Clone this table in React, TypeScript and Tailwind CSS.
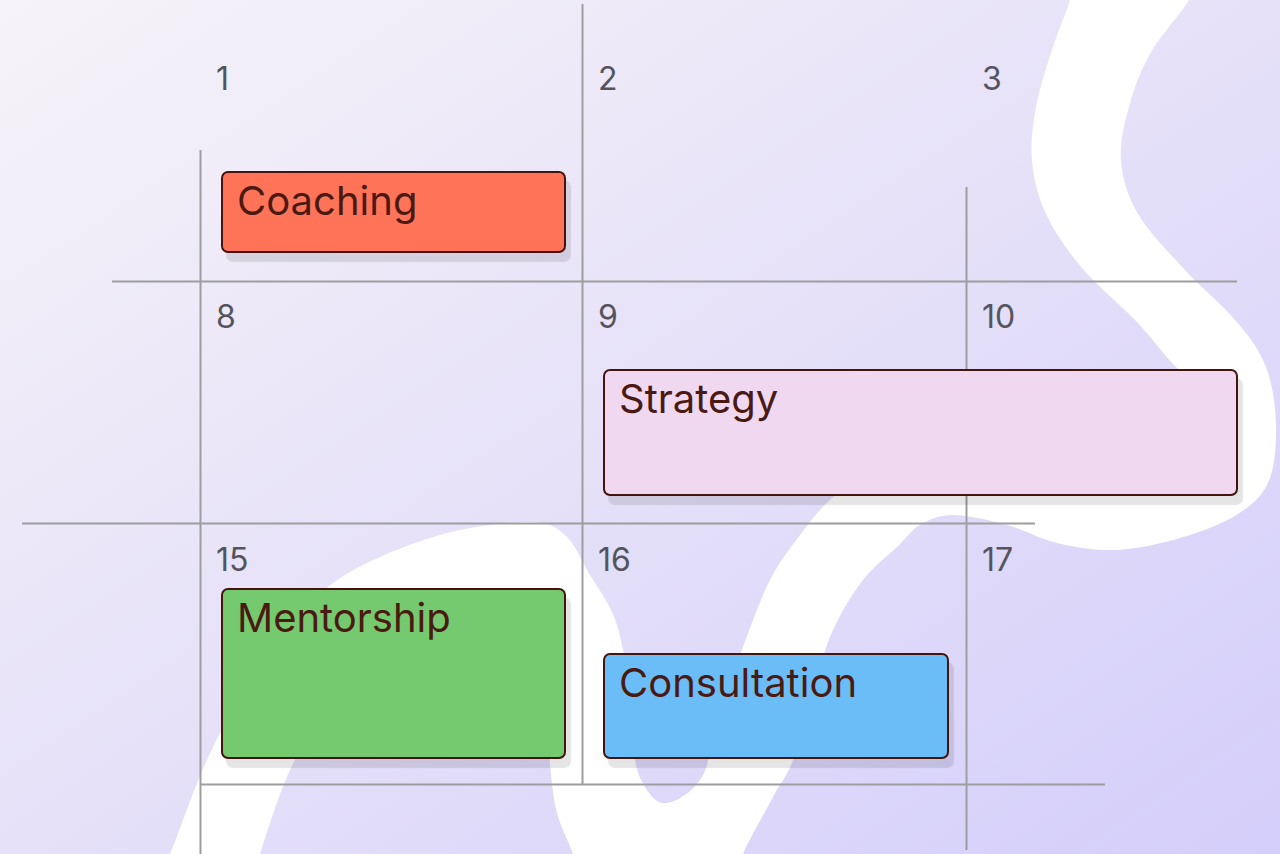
import React from "react";

type Pt = [number, number];

// Catmull-Rom through the points, returned as cubic segments
const smooth = (pts: Pt[]) => {
	let d = "";
	for (let i = 0; i < pts.length - 1; i++) {
		const p0 = pts[i - 1] || pts[i];
		const p1 = pts[i];
		const p2 = pts[i + 1];
		const p3 = pts[i + 2] || p2;
		const c1 = [p1[0] + (p2[0] - p0[0]) / 6, p1[1] + (p2[1] - p0[1]) / 6];
		const c2 = [p2[0] - (p3[0] - p1[0]) / 6, p2[1] - (p3[1] - p1[1]) / 6];
		d += ` C${c1[0]},${c1[1]} ${c2[0]},${c2[1]} ${p2[0]},${p2[1]}`;
	}
	return d;
};

// outer side of the S and the diagonal stroke, top to bottom
const sideB: Pt[] = [
	[1200, -30], [1189, 0], [1150, 54], [1129, 107], [1121, 161], [1138, 214],
	[1185, 270], [1236, 321], [1266, 367], [1276, 425], [1268, 483], [1233, 517],
	[1173, 540], [1113, 550], [1057, 543], [1007, 525], [953, 515], [920, 525],
	[897, 547], [863, 580], [833, 630], [813, 690], [793, 760], [773, 797],
	[743, 854], [733, 890],
];

// inner side of the arch under Mentorship
const hole: Pt[] = [
	[585, 895], [573, 854], [557, 813], [550, 763], [548, 700], [535, 640],
	[500, 615], [440, 620], [380, 652], [330, 702], [290, 770], [260, 854], [250, 895],
];

// arch top, the tongue, and back up the inner side of the S
const sideA: Pt[] = [
	[150, 895], [170, 854], [207, 760], [250, 680], [300, 615], [350, 572],
	[440, 535], [528, 522], [565, 535], [590, 575], [612, 612], [623, 650],
	[630, 705], [635, 760], [645, 787], [662, 803], [685, 795], [703, 775],
	[712, 745], [725, 700], [743, 647], [770, 580], [800, 535], [833, 497],
	[880, 465], [960, 448], [1060, 446], [1150, 440], [1195, 415], [1190, 385],
	[1165, 355], [1136, 321], [1082, 268], [1046, 214], [1032, 161], [1036, 107],
	[1052, 50], [1070, 0], [1075, -30],
];

const ribbon =
	`M${sideB[0][0]},${sideB[0][1]}` +
	smooth(sideB) +
	` L${hole[0][0]},${hole[0][1]}` +
	smooth(hole) +
	` L${sideA[0][0]},${sideA[0][1]}` +
	smooth(sideA) +
	" Z";

const Ribbon = () => (
	<svg className="absolute inset-0" width="1280" height="854" viewBox="0 0 1280 854">
		<path d={ribbon} fill="#ffffff" />
	</svg>
);

const GridLines = () => (
	<svg className="absolute inset-0" width="1280" height="854" viewBox="0 0 1280 854">
		<g stroke="#9d9d9f" strokeWidth="2">
			<line x1="200.5" y1="150" x2="200.5" y2="854" />
			<line x1="582.5" y1="4" x2="582.5" y2="784" />
			<line x1="966.5" y1="187" x2="966.5" y2="850" />
			<line x1="112" y1="281.5" x2="1237" y2="281.5" />
			<line x1="22" y1="523.5" x2="1035" y2="523.5" />
			<line x1="200" y1="784.5" x2="1105" y2="784.5" />
		</g>
	</svg>
);

type EventProps = {
	title: string;
	className: string;
};

const EventCard = ({ title, className }: EventProps) => (
	<div
		className={`ml-[5px] rounded-[7px] border-2 border-[#45140f] pl-[14px] pt-[8px] shadow-[5px_9px_1px_rgba(0,0,0,0.1)] ${className}`}
	>
		<span className="block text-[40px] leading-none text-[#4a1a12]">{title}</span>
	</div>
);

const Day = ({ n, className = "" }: { n: number; className?: string }) => (
	<span className={`block text-[32px] leading-none text-[#55545d] ${className}`}>{n}</span>
);

export default function App() {
	return (
		<div
			className="relative h-[854px] w-full overflow-hidden bg-linear-to-br from-[#f6f3f9] via-[#e6e1f8] to-[#d4cefb]"
			style={{ fontFamily: "Inter, 'Noto Sans', sans-serif" }}
		>
			<Ribbon />
			<GridLines />

			<div className="relative grid grid-cols-[382px_384px_314px] grid-rows-[281px_242px_261px_70px] pl-[200px]">
				{/* week 1 */}
				<div className="flex flex-col pl-4 pt-[63px]">
					<Day n={1} />
					<EventCard title="Coaching" className="mt-[76px] h-[82px] w-[345px] bg-[#ff7459]" />
				</div>
				<div className="pl-4 pt-[63px]">
					<Day n={2} />
				</div>
				<div className="pl-4 pt-[63px]">
					<Day n={3} />
				</div>

				{/* week 2 */}
				<div className="pl-4 pt-[20px]">
					<Day n={8} />
				</div>
				<div className="col-span-2 flex flex-col pl-4 pt-[20px]">
					<div className="flex">
						<Day n={9} className="w-[384px]" />
						<Day n={10} />
					</div>
					<EventCard title="Strategy" className="mt-[36px] h-[127px] w-[635px] bg-[#efd8f0]" />
				</div>

				{/* week 3 */}
				<div className="flex flex-col pl-4 pt-[21px]">
					<Day n={15} />
					<EventCard title="Mentorship" className="mt-[12px] h-[171px] w-[345px] bg-[#75c96f]" />
				</div>
				<div className="flex flex-col pl-4 pt-[21px]">
					<Day n={16} />
					<EventCard title="Consultation" className="mt-[77px] h-[106px] w-[346px] bg-[#6bbdf7]" />
				</div>
				<div className="pl-4 pt-[21px]">
					<Day n={17} />
				</div>
			</div>
		</div>
	);
}
